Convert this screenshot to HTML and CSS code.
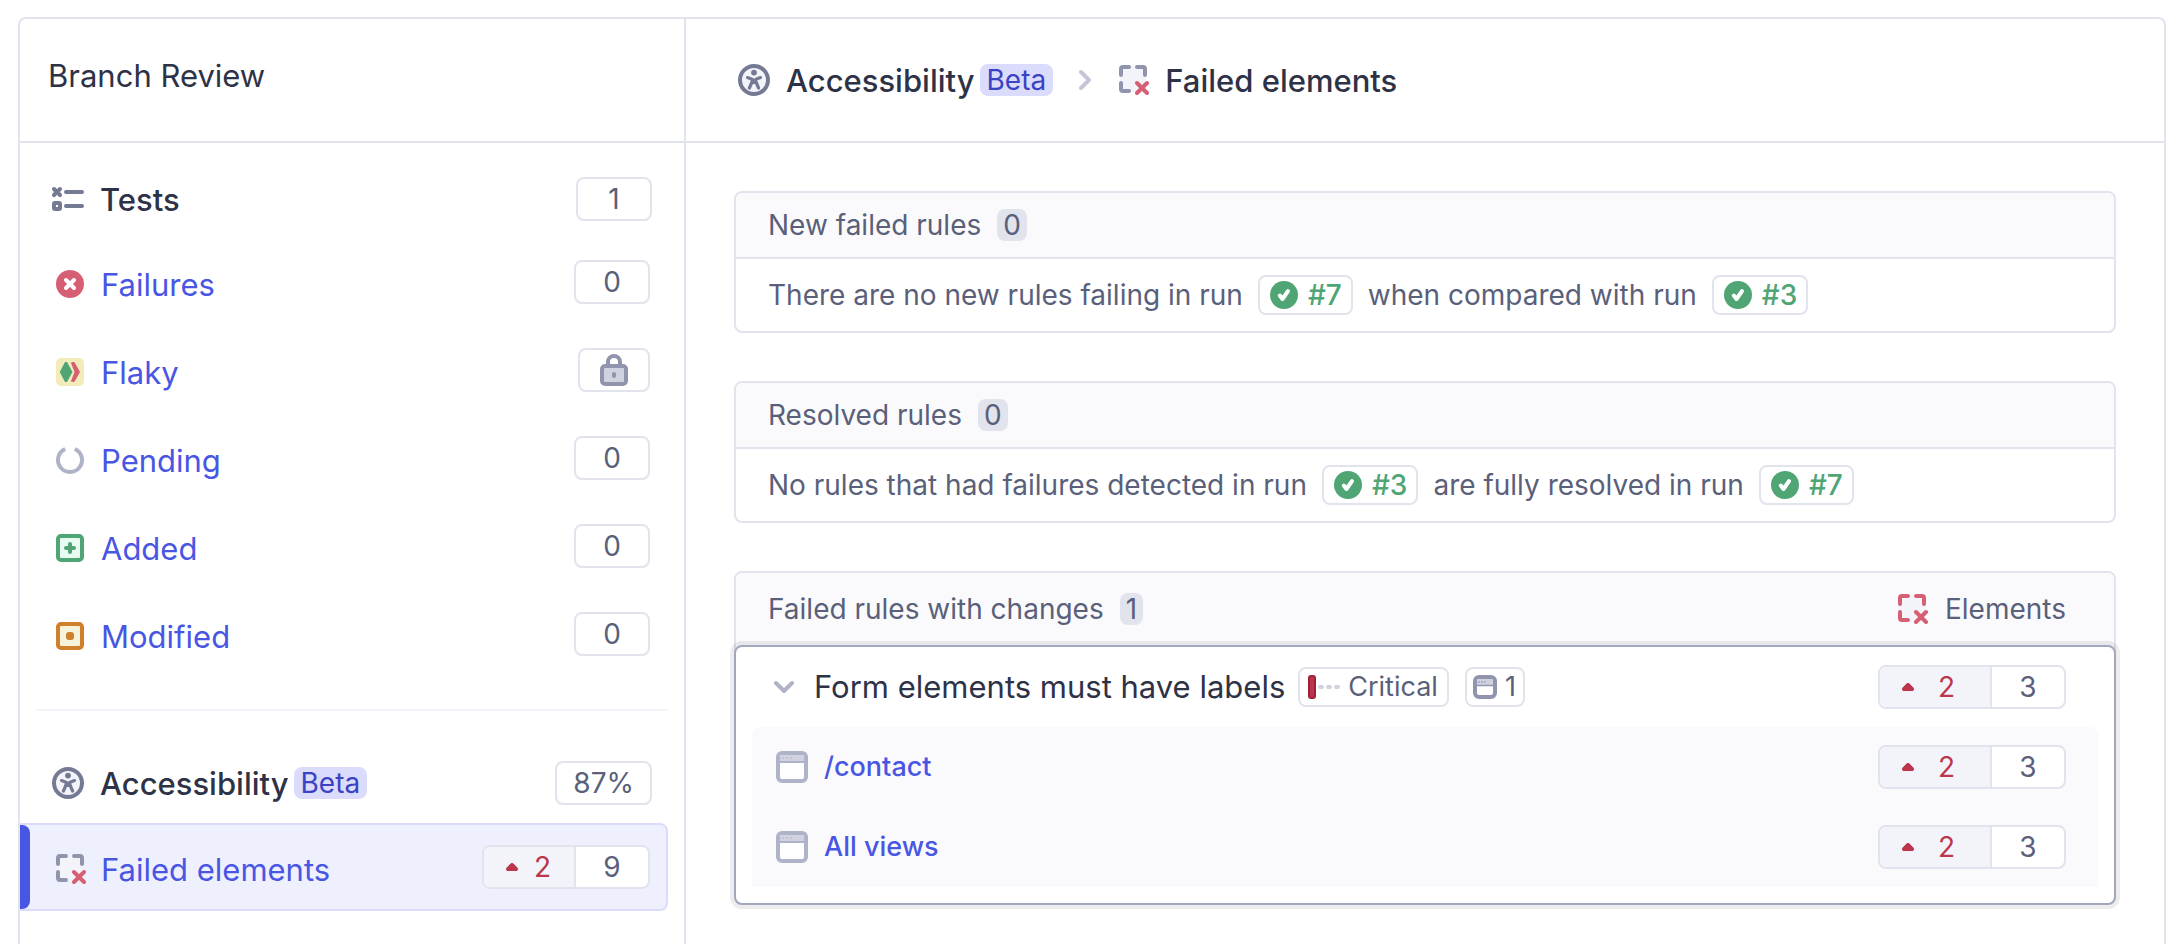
FILE: index.html
```html
<!DOCTYPE html>
<html lang="en">
<head>
<meta charset="utf-8">
<title>Branch Review</title>
<link rel="stylesheet" href="styles.css">
</head>
<body>
<svg class="sprite" aria-hidden="true">
  <symbol id="a11y" viewBox="0 0 32 32">
    <circle cx="16" cy="16" r="14" fill="#f3f4fa" stroke="#747994" stroke-width="4"/>
    <circle cx="16" cy="8.6" r="2.9" fill="#747994"/>
    <path d="M9.5 13.6 14 15.2V18l-2.6 6M22.500 13.600 18 15.200V18l2.600 6M14 16h4M14.500 18.500h3" fill="none" stroke="#747994" stroke-width="3.200" stroke-linecap="round" stroke-linejoin="round"/>
  </symbol>
  <symbol id="elements" viewBox="0 0 30 30">
    <rect x="1" y="1" width="26" height="26" rx="3" fill="#f3f4fa"/>
    <path d="M2 10V4a2 2 0 0 1 2-2h6M18 2h6a2 2 0 0 1 2 2v6M2 18v6a2 2 0 0 0 2 2h6" fill="none" stroke="currentColor" stroke-width="4" stroke-linecap="round"/>
    <path d="m18 18 10 10M28 18 18 28" fill="none" stroke="#d65f73" stroke-width="4" stroke-linecap="round"/>
  </symbol>
  <symbol id="check" viewBox="0 0 28 28">
    <circle cx="14" cy="14" r="14" fill="#4fa573"/>
    <path d="m9.800 14.500 2.700 3.500L18 10.200" fill="none" stroke="#fff" stroke-width="4" stroke-linecap="round" stroke-linejoin="round"/>
  </symbol>
  <symbol id="window" viewBox="0 0 32 32">
    <rect x="2" y="2" width="28" height="28" rx="4" fill="#fff" stroke="#afb3c7" stroke-width="4"/>
    <path d="M4 6a2 2 0 0 1 2-2h20a2 2 0 0 1 2 2v4H4z" fill="#d0d2e0"/>
    <path d="M4 11h24" stroke="#afb3c7" stroke-width="2"/>
    <path d="M6 7h2M10 7h2M14 7h2" stroke="#bfc2d4" stroke-width="2"/>
  </symbol>
  <symbol id="window-sm" viewBox="0 0 24 24">
    <rect x="2" y="2" width="20" height="20" rx="4" fill="#fff" stroke="#9095ad" stroke-width="4"/>
    <path d="M4 6a2 2 0 0 1 2-2h12a2 2 0 0 1 2 2v4H4z" fill="#d0d2e0"/>
    <path d="M4 10.500h16" stroke="#9095ad" stroke-width="1.500"/>
    <path d="M5 7h2M8 7h2M11 7h2" stroke="#afb3c7" stroke-width="2"/>
  </symbol>
  <symbol id="up" viewBox="0 0 12 8">
    <path d="M4.600.6a2 2 0 0 1 2.800 0l3.900 3.800C12.700 5.800 12 8 10 8H2C0 8-.7 5.800.7 4.400z" fill="#bb364c"/>
  </symbol>
</svg>

<div class="app">
  <aside class="sidebar">
    <header class="sidebar-head"><h1 class="title">Branch Review</h1></header>
    <nav class="nav">
      <div class="nav-head">
        <svg class="icon-list" viewBox="0 0 32 24" fill="none" stroke="#747994" stroke-width="4" stroke-linecap="round"><path d="m2 2 6 6M8 2 2 8M14 5h16M14 19h16"/><rect x="2" y="16" width="6" height="6" rx="1"/></svg>
        <h2 class="title medium">Tests</h2>
        <span class="count">1</span>
      </div>
      <ul class="nav-list">
        <li class="nav-row">
          <svg class="icon" viewBox="0 0 28 28"><circle cx="14" cy="14" r="14" fill="#d65f73"/><path d="m10 10 8 8M18 10l-8 8" stroke="#fff" stroke-width="4" stroke-linecap="round"/></svg>
          <a class="nav-link" href="#">Failures</a><span class="count">0</span>
        </li>
        <li class="nav-row">
          <svg class="icon" viewBox="0 0 28 28"><rect width="28" height="28" rx="5" fill="#f2ecb9"/><path d="M9 4h2l5.500 10L11 24H9L3.800 14z" fill="#4fa573"/><path d="M15 5c0-1 3-1.500 4 0l5 9-5 9c-1 1.500-4 1-4 0l3.500-9z" fill="#d65f73"/></svg>
          <a class="nav-link" href="#">Flaky</a>
          <span class="count locked"><svg class="lock" viewBox="0 0 28 32" role="img" aria-label="Locked"><path d="M8 11V8a6 6 0 0 1 12 0v3" fill="none" stroke="#9095ad" stroke-width="4"/><rect x="2" y="12" width="24" height="18" rx="3" fill="#d0d2e0" stroke="#9095ad" stroke-width="4"/><rect x="12" y="18" width="4" height="6" rx="2" fill="#9095ad"/></svg></span>
        </li>
        <li class="nav-row">
          <svg class="icon" viewBox="0 0 28 28"><path d="M9.200 3a12 12 0 1 0 9.600 0" fill="none" stroke="#afb3c7" stroke-width="4"/></svg>
          <a class="nav-link" href="#">Pending</a><span class="count">0</span>
        </li>
        <li class="nav-row">
          <svg class="icon" viewBox="0 0 28 28"><rect x="2" y="2" width="24" height="24" rx="3" fill="#e8faf2" stroke="#4fa573" stroke-width="4"/><path d="M10 14h8M14 10v8" stroke="#4fa573" stroke-width="4" stroke-linecap="round"/></svg>
          <a class="nav-link" href="#">Added</a><span class="count">0</span>
        </li>
        <li class="nav-row">
          <svg class="icon" viewBox="0 0 28 28"><rect x="2" y="2" width="24" height="24" rx="3" fill="#f6f3dc" stroke="#d07f2d" stroke-width="4"/><rect x="10" y="10" width="8" height="8" rx="3" fill="#d07f2d"/></svg>
          <a class="nav-link" href="#">Modified</a><span class="count">0</span>
        </li>
      </ul>
      <hr class="divider">
      <div class="nav-head">
        <svg class="icon-lg"><use href="#a11y"/></svg>
        <h2 class="title medium">Accessibility</h2><span class="beta">Beta</span>
        <span class="count">87%</span>
      </div>
      <div class="nav-row selected">
        <svg class="icon-el"><use href="#elements"/></svg>
        <a class="nav-link" href="#" aria-current="page">Failed elements</a>
        <span class="delta"><span class="delta-up"><svg class="up"><use href="#up"/></svg>2</span><span class="delta-total">9</span></span>
      </div>
    </nav>
  </aside>

  <main class="main">
    <header class="crumbs">
      <svg class="icon-lg"><use href="#a11y"/></svg>
      <span class="title medium">Accessibility</span><span class="beta">Beta</span>
      <svg class="crumb-sep" viewBox="0 0 12 20"><path d="m2 2 8 8-8 8" fill="none" stroke="#c4c6d7" stroke-width="4" stroke-linecap="round" stroke-linejoin="round"/></svg>
      <svg class="icon-el"><use href="#elements"/></svg>
      <span class="title medium">Failed elements</span>
    </header>
    <div class="panels">
      <section class="panel">
        <header class="panel-head"><h3 class="panel-title">New failed rules</h3><span class="tally">0</span></header>
        <p class="panel-body">There are no new rules failing in run <a class="run" href="#"><svg class="icon"><use href="#check"/></svg>#7</a> when compared with run <a class="run" href="#"><svg class="icon"><use href="#check"/></svg>#3</a></p>
      </section>
      <section class="panel">
        <header class="panel-head"><h3 class="panel-title">Resolved rules</h3><span class="tally">0</span></header>
        <p class="panel-body">No rules that had failures detected in run <a class="run" href="#"><svg class="icon"><use href="#check"/></svg>#3</a> are fully resolved in run <a class="run" href="#"><svg class="icon"><use href="#check"/></svg>#7</a></p>
      </section>
      <section class="panel changes">
        <header class="panel-head tall"><h3 class="panel-title">Failed rules with changes</h3><span class="tally">1</span><span class="column"><svg class="icon-el red"><use href="#elements"/></svg>Elements</span></header>
        <div class="card">
          <div class="rule">
            <button class="toggle" type="button" aria-label="Collapse rule" aria-expanded="true"><svg class="chevron" viewBox="0 0 20 12"><path d="m2 2 8 8 8-8" fill="none" stroke="#afb3c7" stroke-width="4" stroke-linecap="round" stroke-linejoin="round"/></svg></button>
            <h4 class="title">Form elements must have labels</h4>
            <span class="chip severity"><svg class="level" viewBox="0 0 32 24"><rect x="1" y="1" width="6" height="22" rx="2" fill="#bb364c" stroke="#9f2039" stroke-width="2"/><path d="M12 12h2M20 12h2M28 12h2" stroke="#d0d2e0" stroke-width="4" stroke-linecap="round"/></svg>Critical</span>
            <span class="chip"><svg class="icon-sm"><use href="#window-sm"/></svg>1</span>
            <span class="delta wide"><span class="delta-up"><svg class="up"><use href="#up"/></svg>2</span><span class="delta-total">3</span></span>
          </div>
          <ul class="views">
            <li class="view"><svg class="icon-lg"><use href="#window"/></svg><a class="view-link" href="#">/contact</a><span class="delta wide"><span class="delta-up"><svg class="up"><use href="#up"/></svg>2</span><span class="delta-total">3</span></span></li>
            <li class="view"><svg class="icon-lg"><use href="#window"/></svg><a class="view-link" href="#">All views</a><span class="delta wide"><span class="delta-up"><svg class="up"><use href="#up"/></svg>2</span><span class="delta-total">3</span></span></li>
          </ul>
        </div>
      </section>
    </div>
  </main>
</div>
</body>
</html>
```

FILE: styles.css
```css
* { box-sizing: border-box; }

body {
  margin: 0;
  padding: 17px 18px 0;
  background: #fff;
  color: #5a5f7a;
  font: 400 28px/32px Inter, "Liberation Sans", sans-serif;
}

h1, h2, h3, h4, p, ul { margin: 0; padding: 0; font: inherit; }
ul { list-style: none; }
a { color: #4956e3; text-decoration: none; }
svg { flex: none; display: block; overflow: visible; }

.sprite { position: absolute; width: 0; height: 0; }

.app {
  display: grid;
  grid-template-columns: 666px minmax(0, 1fr);
  min-height: calc(100vh - 17px);
  border: 2px solid #e1e3ed;
  border-bottom: 0;
  border-radius: 8px 8px 0 0;
}

/* Text and icon sizes */
.title { color: #2e3247; font-size: 31px; line-height: 40px; }
.medium { padding-top: 2px; font-weight: 500; }
.icon { width: 28px; height: 28px; }
.icon-el { width: 30px; height: 30px; color: #9095ad; }
.icon-el.red { color: #d65f73; }
.icon-lg { width: 32px; height: 32px; }
.icon-sm { width: 24px; height: 24px; }
.icon-list { width: 32px; height: 24px; }

/* Sidebar */
.sidebar { border-right: 2px solid #e1e3ed; }
.sidebar-head {
  display: flex;
  align-items: center;
  height: 124px;
  padding: 0 28px 8px;
  border-bottom: 2px solid #e1e3ed;
}
.nav { padding-top: 20px; }
.nav-head {
  display: flex;
  align-items: center;
  height: 72px;
  padding: 0 32px;
}
.nav-head .title { margin-left: 16px; }
.nav-list { padding-top: 4px; }
.nav-row {
  display: flex;
  align-items: center;
  gap: 17px;
  height: 88px;
  padding: 2px 34px 0 36px;
}
.nav-link { padding-top: 2px; font-size: 31px; line-height: 40px; }
.nav-row .icon-el { margin-right: -2px; }
.nav-row .count, .nav-row .delta { margin-bottom: 4px; }

.count {
  display: flex;
  align-items: center;
  justify-content: center;
  min-width: 76px;
  height: 44px;
  margin-left: auto;
  padding: 0 16px;
  border: 2px solid #e1e3ed;
  border-radius: 8px;
  background: #fff;
}
.locked { min-width: 72px; }
.lock { width: 28px; height: 32px; }

.divider {
  height: 2px;
  margin: 30px 16px 36px;
  border: 0;
  background: #f3f4fa;
}

.selected {
  position: relative;
  margin: 4px 16px 0 0;
  padding: 4px 16px 0 36px;
  border: 2px solid #dbdcfb;
  border-left: 0;
  border-radius: 0 8px 8px 0;
  background: #eff0fe;
}
.selected::before {
  content: "";
  position: absolute;
  inset: 0 auto 0 0;
  width: 10px;
  border-radius: 0 8px 8px 0;
  background: #4956e3;
}

.beta {
  margin-left: 5px;
  padding: 0 7px;
  border-radius: 8px;
  background: #dbdcfb;
  color: #3a43c4;
}

/* Change counter */
.delta {
  display: flex;
  height: 44px;
  margin-left: auto;
  border: 2px solid #e1e3ed;
  border-radius: 8px;
  background: #fff;
  line-height: 40px;
  overflow: hidden;
}
.delta-up {
  display: flex;
  align-items: center;
  gap: 16px;
  width: 92px;
  padding-left: 22px;
  border-right: 2px solid #e1e3ed;
  background: #f3f4fa;
  color: #bb364c;
}
.delta-total { width: 72px; text-align: center; }
.wide .delta-up { gap: 24px; width: 112px; }
.up { width: 12px; height: 8px; }

/* Main column */
.crumbs {
  display: flex;
  align-items: center;
  height: 124px;
  padding: 0 52px;
  border-bottom: 2px solid #e1e3ed;
}
.crumbs .title { margin-left: 16px; }
.crumb-sep { width: 12px; height: 20px; margin: 0 28px 0 26px; }

.panels {
  display: flex;
  flex-direction: column;
  gap: 48px;
  padding: 48px;
}
.panel { border: 2px solid #e1e3ed; border-radius: 8px; }
.panel-head {
  display: flex;
  align-items: center;
  gap: 16px;
  height: 66px;
  padding: 0 48px 0 32px;
  border-bottom: 2px solid #e1e3ed;
  border-radius: 6px 6px 0 0;
  background: #fafafc;
}
.tally { padding: 0 6px; border-radius: 8px; background: #e1e3ed; }
.panel-body {
  display: flex;
  align-items: center;
  gap: 15px;
  height: 72px;
  padding: 0 32px;
}
.run, .chip {
  display: flex;
  align-items: center;
  gap: 8px;
  height: 40px;
  padding: 0 8px;
  border: 2px solid #e1e3ed;
  border-radius: 8px;
  background: #fff;
}
.run { gap: 10px; padding: 0 9px 0 10px; color: #4fa573; font-weight: 500; }

.changes { border-bottom: 0; }
.tall { height: 72px; border-bottom: 0; }
.column {
  display: flex;
  align-items: center;
  gap: 17px;
  margin-left: auto;
}
.card {
  margin: 0 -2px;
  padding: 0 16px 16px;
  border: 2px solid #a3a7bd;
  border-radius: 8px;
  background: #fff;
  box-shadow: 0 0 0 4px rgba(0, 0, 0, 0.07);
}
.rule, .view {
  display: flex;
  align-items: center;
  height: 80px;
}
.rule { padding: 0 32px 0 22px; }
.toggle { padding: 0; border: 0; background: none; cursor: pointer; }
.chevron { width: 20px; height: 12px; }
.rule .title { margin-left: 20px; }
.chip { margin-left: 16px; padding: 0 7px 0 6px; font-size: 27px; }
.severity { margin-left: 13px; padding: 0 9px 0 8px; }
.level { width: 32px; height: 24px; }
.views { border-radius: 8px 8px 0 0; background: #fafafc; }
.view { gap: 16px; padding: 0 32px 0 24px; }
.view-link { font-size: 27px; font-weight: 500; }
```
